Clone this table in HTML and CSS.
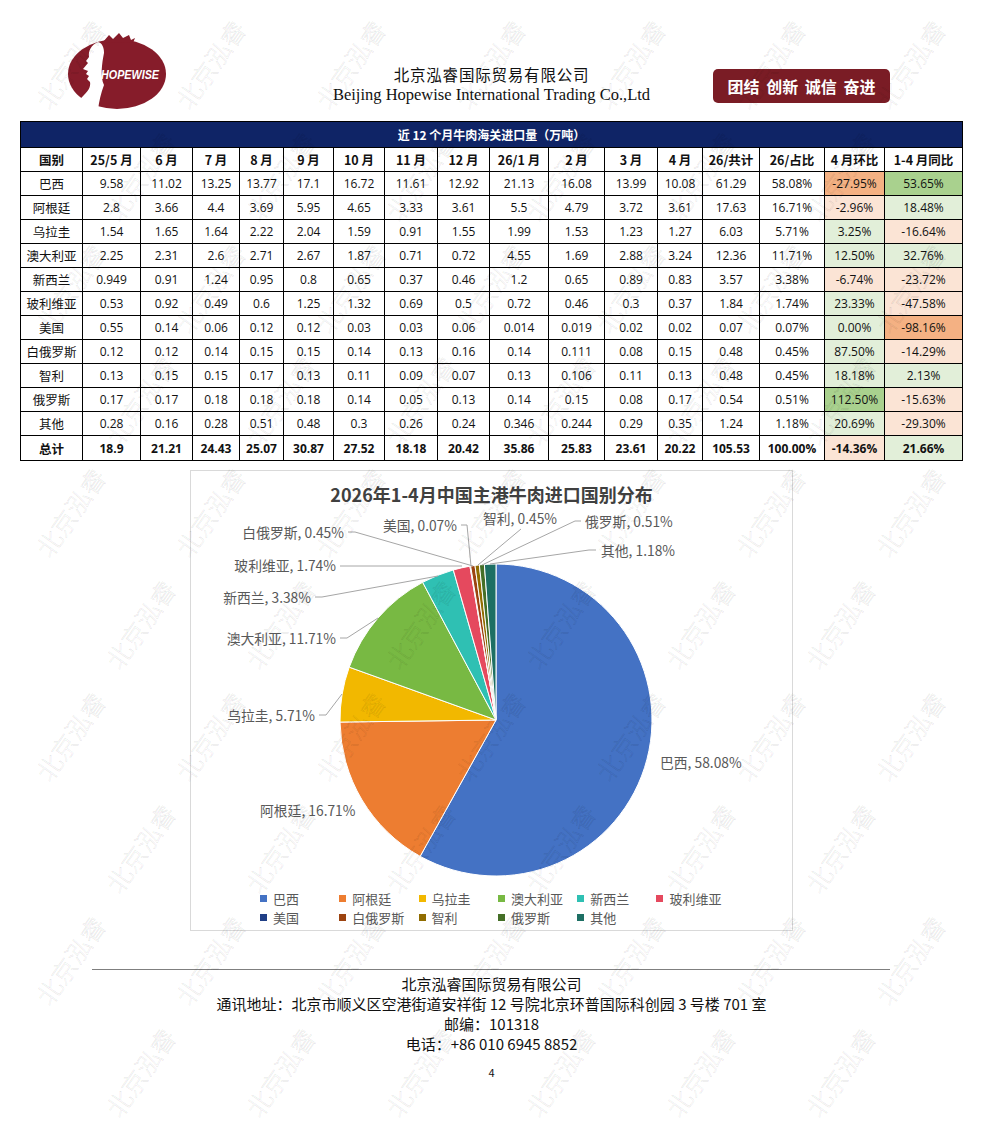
FILE: index.html
```html
<!DOCTYPE html>
<html lang="zh-CN">
<head>
<meta charset="utf-8">
<title>北京泓睿国际贸易有限公司 - 牛肉进口</title>
<link rel="stylesheet" href="styles.css">
</head>
<body>
<div class="page">
  <header class="header">
    <div class="logo">
      <svg viewBox="0 0 102 78" width="102" height="78">
        <ellipse cx="52" cy="41" rx="49" ry="35" fill="#861c2a"/>
        <path d="M38 9 L44 2 L48 6 L54 0 L58 5 L64 2 L66 7 L70 5 L68 10 Z" fill="#861c2a"/>
        <path d="M33 9 C26 12 23 18 24 24 L21 28 L23 30 L18 36 L23 38 L21 41 L24 43 L22 46 L25 49 C26 54 23 58 19 62 C15 66 12 70 10 74 C18 78 26 78 33 77 C34 68 36 60 39 52 C35 44 37 30 39 20 C39 14 37 10 33 9 Z" fill="#fff"/>
        <text x="36" y="46" class="logo-text" textLength="58" lengthAdjust="spacingAndGlyphs">HOPEWISE</text>
      </svg>
    </div>
    <div class="company">
      <div class="company-cn">北京泓睿国际贸易有限公司</div>
      <div class="company-en">Beijing Hopewise International Trading Co.,Ltd</div>
    </div>
    <div class="badge">团结 创新 诚信 奋进</div>
  </header>

  <table class="data">
    <colgroup>
      <col style="width:62px"><col style="width:58px"><col style="width:52px"><col style="width:47px"><col style="width:44px"><col style="width:50px"><col style="width:51px"><col style="width:53px"><col style="width:52px"><col style="width:59px"><col style="width:56px"><col style="width:53px"><col style="width:45px"><col style="width:57px"><col style="width:65px"><col style="width:60px"><col style="width:78px">
    </colgroup>
    <thead>
      <tr class="title-row"><th colspan="17">近 12 个月牛肉海关进口量（万吨）</th></tr>
      <tr class="head-row">
        <th>国别</th><th>25/5 月</th><th>6 月</th><th>7 月</th><th>8 月</th><th>9 月</th><th>10 月</th><th>11 月</th><th>12 月</th><th>26/1 月</th><th>2 月</th><th>3 月</th><th>4 月</th><th>26/共计</th><th>26/占比</th><th>4 月环比</th><th>1-4 月同比</th>
      </tr>
    </thead>
    <tbody>
      <tr><td class="cn">巴西</td><td>9.58</td><td>11.02</td><td>13.25</td><td>13.77</td><td>17.1</td><td>16.72</td><td>11.61</td><td>12.92</td><td>21.13</td><td>16.08</td><td>13.99</td><td>10.08</td><td>61.29</td><td>58.08%</td><td class="neg-strong">-27.95%</td><td class="pos-strong">53.65%</td></tr>
      <tr><td class="cn">阿根廷</td><td>2.8</td><td>3.66</td><td>4.4</td><td>3.69</td><td>5.95</td><td>4.65</td><td>3.33</td><td>3.61</td><td>5.5</td><td>4.79</td><td>3.72</td><td>3.61</td><td>17.63</td><td>16.71%</td><td class="neg">-2.96%</td><td class="pos">18.48%</td></tr>
      <tr><td class="cn">乌拉圭</td><td>1.54</td><td>1.65</td><td>1.64</td><td>2.22</td><td>2.04</td><td>1.59</td><td>0.91</td><td>1.55</td><td>1.99</td><td>1.53</td><td>1.23</td><td>1.27</td><td>6.03</td><td>5.71%</td><td class="pos">3.25%</td><td class="neg">-16.64%</td></tr>
      <tr><td class="cn">澳大利亚</td><td>2.25</td><td>2.31</td><td>2.6</td><td>2.71</td><td>2.67</td><td>1.87</td><td>0.71</td><td>0.72</td><td>4.55</td><td>1.69</td><td>2.88</td><td>3.24</td><td>12.36</td><td>11.71%</td><td class="pos">12.50%</td><td class="pos">32.76%</td></tr>
      <tr><td class="cn">新西兰</td><td>0.949</td><td>0.91</td><td>1.24</td><td>0.95</td><td>0.8</td><td>0.65</td><td>0.37</td><td>0.46</td><td>1.2</td><td>0.65</td><td>0.89</td><td>0.83</td><td>3.57</td><td>3.38%</td><td class="neg">-6.74%</td><td class="neg">-23.72%</td></tr>
      <tr><td class="cn">玻利维亚</td><td>0.53</td><td>0.92</td><td>0.49</td><td>0.6</td><td>1.25</td><td>1.32</td><td>0.69</td><td>0.5</td><td>0.72</td><td>0.46</td><td>0.3</td><td>0.37</td><td>1.84</td><td>1.74%</td><td class="pos">23.33%</td><td class="neg">-47.58%</td></tr>
      <tr><td class="cn">美国</td><td>0.55</td><td>0.14</td><td>0.06</td><td>0.12</td><td>0.12</td><td>0.03</td><td>0.03</td><td>0.06</td><td>0.014</td><td>0.019</td><td>0.02</td><td>0.02</td><td>0.07</td><td>0.07%</td><td class="pos">0.00%</td><td class="neg-strong">-98.16%</td></tr>
      <tr><td class="cn">白俄罗斯</td><td>0.12</td><td>0.12</td><td>0.14</td><td>0.15</td><td>0.15</td><td>0.14</td><td>0.13</td><td>0.16</td><td>0.14</td><td>0.111</td><td>0.08</td><td>0.15</td><td>0.48</td><td>0.45%</td><td class="pos">87.50%</td><td class="neg">-14.29%</td></tr>
      <tr><td class="cn">智利</td><td>0.13</td><td>0.15</td><td>0.15</td><td>0.17</td><td>0.13</td><td>0.11</td><td>0.09</td><td>0.07</td><td>0.13</td><td>0.106</td><td>0.11</td><td>0.13</td><td>0.48</td><td>0.45%</td><td class="pos">18.18%</td><td class="pos">2.13%</td></tr>
      <tr><td class="cn">俄罗斯</td><td>0.17</td><td>0.17</td><td>0.18</td><td>0.18</td><td>0.18</td><td>0.14</td><td>0.05</td><td>0.13</td><td>0.14</td><td>0.15</td><td>0.08</td><td>0.17</td><td>0.54</td><td>0.51%</td><td class="pos-strong">112.50%</td><td class="neg">-15.63%</td></tr>
      <tr><td class="cn">其他</td><td>0.28</td><td>0.16</td><td>0.28</td><td>0.51</td><td>0.48</td><td>0.3</td><td>0.26</td><td>0.24</td><td>0.346</td><td>0.244</td><td>0.29</td><td>0.35</td><td>1.24</td><td>1.18%</td><td class="pos">20.69%</td><td class="neg">-29.30%</td></tr>
      <tr class="total-row"><td class="cn">总计</td><td>18.9</td><td>21.21</td><td>24.43</td><td>25.07</td><td>30.87</td><td>27.52</td><td>18.18</td><td>20.42</td><td>35.86</td><td>25.83</td><td>23.61</td><td>20.22</td><td>105.53</td><td>100.00%</td><td class="neg">-14.36%</td><td class="pos">21.66%</td></tr>
    </tbody>
  </table>

  <section class="chart">
    <h2 class="chart-title">2026年1-4月中国主港牛肉进口国别分布</h2>
    <svg class="pie" viewBox="0 0 601 378" width="601" height="378">
      <g class="slices">
        <path d="M305,211 L305,55 A156,156 0 1 1 229.15,347.33 Z" fill="#4472c4"/>
        <path d="M305,211 L229.15,347.33 A156,156 0 0 1 149.01,213.07 Z" fill="#ed7d31"/>
        <path d="M305,211 L149.01,213.07 A156,156 0 0 1 158.22,158.16 Z" fill="#f2b800"/>
        <path d="M305,211 L158.22,158.16 A156,156 0 0 1 231.66,73.31 Z" fill="#78b943"/>
        <path d="M305,211 L231.66,73.31 A156,156 0 0 1 262.32,60.96 Z" fill="#2fc0b3"/>
        <path d="M305,211 L262.32,60.96 A156,156 0 0 1 278.95,57.18 Z" fill="#e5495e"/>
        <path d="M305,211 L278.95,57.18 A156,156 0 0 1 279.63,57.08 Z" fill="#203f86"/>
        <path d="M305,211 L279.63,57.08 A156,156 0 0 1 283.99,56.42 Z" fill="#9c4310"/>
        <path d="M305,211 L283.99,56.42 A156,156 0 0 1 288.37,55.89 Z" fill="#906c00"/>
        <path d="M305,211 L288.37,55.89 A156,156 0 0 1 293.36,55.44 Z" fill="#456f27"/>
        <path d="M305,211 L293.36,55.44 A156,156 0 0 1 305,55 Z" fill="#1d6f64"/>
      </g>
      <g class="leaders">
        <polyline points="157,23 164,23 282,57"/>
        <polyline points="270,16 276,16 280,57"/>
        <polyline points="330,20 287,56"/>
        <polyline points="390,12 384,12 291,56"/>
        <polyline points="405,41 398,41 299,55"/>
        <polyline points="149,57 271,57"/>
        <polyline points="124,88 131,88 247,67"/>
        <polyline points="149,129 156,129 187,109"/>
        <polyline points="128,206 135,206 151,185"/>
      </g>
      <g class="labels">
        <text x="153" y="23" text-anchor="end">白俄罗斯, 0.45%</text>
        <text x="266" y="16" text-anchor="end">美国, 0.07%</text>
        <text x="292" y="9">智利, 0.45%</text>
        <text x="394" y="12">俄罗斯, 0.51%</text>
        <text x="410" y="41">其他, 1.18%</text>
        <text x="145" y="56" text-anchor="end">玻利维亚, 1.74%</text>
        <text x="120" y="88" text-anchor="end">新西兰, 3.38%</text>
        <text x="145" y="129" text-anchor="end">澳大利亚, 11.71%</text>
        <text x="124" y="206" text-anchor="end">乌拉圭, 5.71%</text>
        <text x="69" y="301">阿根廷, 16.71%</text>
        <text x="469" y="253">巴西, 58.08%</text>
      </g>
    </svg>
    <ul class="legend">
      <li><span class="sw c1"></span>巴西</li>
      <li><span class="sw c2"></span>阿根廷</li>
      <li><span class="sw c3"></span>乌拉圭</li>
      <li><span class="sw c4"></span>澳大利亚</li>
      <li><span class="sw c5"></span>新西兰</li>
      <li><span class="sw c6"></span>玻利维亚</li>
      <li><span class="sw c7"></span>美国</li>
      <li><span class="sw c8"></span>白俄罗斯</li>
      <li><span class="sw c9"></span>智利</li>
      <li><span class="sw c10"></span>俄罗斯</li>
      <li><span class="sw c11"></span>其他</li>
    </ul>
  </section>

  <footer class="footer">
    <div class="footer-rule"></div>
    <div class="footer-lines">
      <p>北京泓睿国际贸易有限公司</p>
      <p>通讯地址：北京市顺义区空港街道安祥街 12 号院北京环普国际科创园 3 号楼 701 室</p>
      <p>邮编：101318</p>
      <p>电话：+86 010 6945 8852</p>
    </div>
    <div class="page-num">4</div>
  </footer>

  <div class="wm" aria-hidden="true">
    <div class="wm-row"><span>北京泓睿</span><span>北京泓睿</span><span>北京泓睿</span><span>北京泓睿</span><span>北京泓睿</span><span>北京泓睿</span><span>北京泓睿</span></div>
    <div class="wm-row"><span>北京泓睿</span><span>北京泓睿</span><span>北京泓睿</span><span>北京泓睿</span><span>北京泓睿</span><span>北京泓睿</span></div>
    <div class="wm-row"><span>北京泓睿</span><span>北京泓睿</span><span>北京泓睿</span><span>北京泓睿</span><span>北京泓睿</span><span>北京泓睿</span><span>北京泓睿</span></div>
    <div class="wm-row"><span>北京泓睿</span><span>北京泓睿</span><span>北京泓睿</span><span>北京泓睿</span><span>北京泓睿</span><span>北京泓睿</span></div>
    <div class="wm-row"><span>北京泓睿</span><span>北京泓睿</span><span>北京泓睿</span><span>北京泓睿</span><span>北京泓睿</span><span>北京泓睿</span><span>北京泓睿</span></div>
    <div class="wm-row"><span>北京泓睿</span><span>北京泓睿</span><span>北京泓睿</span><span>北京泓睿</span><span>北京泓睿</span><span>北京泓睿</span></div>
    <div class="wm-row"><span>北京泓睿</span><span>北京泓睿</span><span>北京泓睿</span><span>北京泓睿</span><span>北京泓睿</span><span>北京泓睿</span><span>北京泓睿</span></div>
    <div class="wm-row"><span>北京泓睿</span><span>北京泓睿</span><span>北京泓睿</span><span>北京泓睿</span><span>北京泓睿</span><span>北京泓睿</span></div>
    <div class="wm-row"><span>北京泓睿</span><span>北京泓睿</span><span>北京泓睿</span><span>北京泓睿</span><span>北京泓睿</span><span>北京泓睿</span><span>北京泓睿</span></div>
    <div class="wm-row"><span>北京泓睿</span><span>北京泓睿</span><span>北京泓睿</span><span>北京泓睿</span><span>北京泓睿</span><span>北京泓睿</span></div>
  </div>
</div>
</body>
</html>
```

FILE: styles.css
```css
* { box-sizing: border-box; }

body {
  margin: 0;
  background: #ffffff;
  font-family: "Noto Sans CJK SC", "Noto Sans", sans-serif;
  color: #000;
}

.page {
  position: relative;
  width: 983px;
  height: 1133px;
  overflow: hidden;
}

/* ---------- header ---------- */
.header {
  display: grid;
  grid-template-columns: 1fr auto 1fr;
  align-items: start;
  padding-top: 33px;
  height: 111px;
}

.logo {
  margin-left: 65px;
  width: 102px;
  height: 78px;
}

.logo svg { display: block; }

.logo-text {
  font-family: "Liberation Sans", sans-serif;
  font-weight: 700;
  font-style: italic;
  font-size: 12.5px;
  fill: #ffffff;
}

.company {
  margin-top: 31px;
  text-align: center;
}

.company-cn {
  font-family: "Noto Sans CJK SC", sans-serif;
  font-size: 15.5px;
  line-height: 20px;
  letter-spacing: 0.8px;
  font-weight: 400;
  color: #111;
}

.company-en {
  font-family: "Liberation Serif", serif;
  font-size: 16.5px;
  line-height: 22px;
  color: #111;
}

.badge {
  justify-self: end;
  margin-top: 36px;
  margin-right: 93px;
  width: 177px;
  height: 34px;
  background: #7a1c25;
  border-radius: 5px;
  color: #ffffff;
  font-family: "Noto Sans CJK SC", sans-serif;
  font-weight: 700;
  font-size: 16px;
  line-height: 34px;
  word-spacing: 3px;
  text-align: center;
  white-space: pre;
}

/* ---------- table ---------- */
.data {
  margin: 10px 0 0 20px;
  width: 943px;
  border-collapse: collapse;
  table-layout: fixed;
  border: 1.5px solid #000;
  font-family: "Open Sans", "Noto Sans CJK SC", sans-serif;
  font-size: 12px;
  color: #111;
}

.data th,
.data td {
  border: 1px solid #000;
  text-align: center;
  padding: 0;
  white-space: nowrap;
}

.title-row th {
  height: 26px;
  background: #0f2466;
  color: #ffffff;
  font-family: "Noto Sans CJK SC", sans-serif;
  font-weight: 700;
  font-size: 12px;
}

.head-row th {
  height: 24px;
  font-family: "Noto Sans CJK SC", sans-serif;
  font-weight: 700;
  font-size: 12.5px;
}

.data tbody tr { height: 24px; }
.data tbody tr.total-row { height: 25px; }

.data td.cn {
  font-family: "Noto Sans CJK SC", sans-serif;
  font-size: 12.5px;
}

.total-row td { font-weight: 700; }

.data td.neg { background: #fbe4d5; }
.data td.pos { background: #e2efd9; }
.data td.neg-strong { background: #f4b183; }
.data td.pos-strong { background: #a9d18e; }

/* ---------- chart ---------- */
.chart {
  width: 603px;
  height: 461px;
  margin: 9px auto 0;
  border: 1px solid #d9d9d9;
  background: #fff;
}

.chart-title {
  margin: 0;
  height: 36px;
  padding-top: 10px;
  line-height: 26px;
  text-align: center;
  font-family: "Noto Sans CJK SC", sans-serif;
  font-weight: 700;
  font-size: 18px;
  color: #404040;
}

.pie {
  display: block;
  margin-top: 2px;
}

.slices path {
  stroke: #ffffff;
  stroke-width: 1;
}

.leaders polyline {
  fill: none;
  stroke: #a6a6a6;
  stroke-width: 1;
}

.labels text {
  font-family: "Noto Sans CJK SC", sans-serif;
  font-size: 13.8px;
  fill: #595959;
  dominant-baseline: central;
}

.legend {
  list-style: none;
  margin: 2px 0 0;
  padding: 0 0 0 69px;
  display: grid;
  grid-template-columns: repeat(6, 79.3px);
  grid-auto-rows: 19px;
  font-family: "Noto Sans CJK SC", sans-serif;
  font-size: 13px;
  color: #595959;
}

.legend li {
  display: flex;
  align-items: center;
  gap: 6px;
  white-space: nowrap;
}

.sw {
  width: 7px;
  height: 7px;
  flex: none;
}

.c1 { background: #4472c4; }
.c2 { background: #ed7d31; }
.c3 { background: #f2b800; }
.c4 { background: #78b943; }
.c5 { background: #2fc0b3; }
.c6 { background: #e5495e; }
.c7 { background: #203f86; }
.c8 { background: #9c4310; }
.c9 { background: #906c00; }
.c10 { background: #456f27; }
.c11 { background: #1d6f64; }

/* ---------- footer ---------- */
.footer {
  margin-top: 38px;
}

.footer-rule {
  width: 798px;
  margin: 0 0 0 92px;
  border-top: 1px solid #7f7f7f;
}

.footer-lines {
  padding-top: 4px;
  text-align: center;
  font-family: "Noto Sans CJK SC", sans-serif;
  font-size: 15px;
  line-height: 20px;
  color: #111;
}

.footer-lines p { margin: 0; }

.page-num {
  margin-top: 10px;
  text-align: center;
  font-family: "Noto Sans CJK SC", sans-serif;
  font-size: 11px;
  line-height: 16px;
  color: #111;
}

/* ---------- watermark overlay ---------- */
.wm {
  position: absolute;
  top: 8px;
  left: 0;
  width: 983px;
  height: 1120px;
  pointer-events: none;
  z-index: 5;
  overflow: hidden;
}

.wm-row {
  display: flex;
  height: 112px;
}

.wm-row:nth-child(even) { margin-left: 70px; }

.wm-row span {
  flex: none;
  width: 140px;
  height: 112px;
  display: flex;
  align-items: center;
  justify-content: center;
  transform: rotate(-55deg);
  font-family: "Noto Sans CJK SC", sans-serif;
  font-size: 25px;
  font-weight: 300;
  color: transparent;
  -webkit-text-stroke: 0.5px rgba(0, 0, 0, 0.13);
  white-space: nowrap;
}
```
